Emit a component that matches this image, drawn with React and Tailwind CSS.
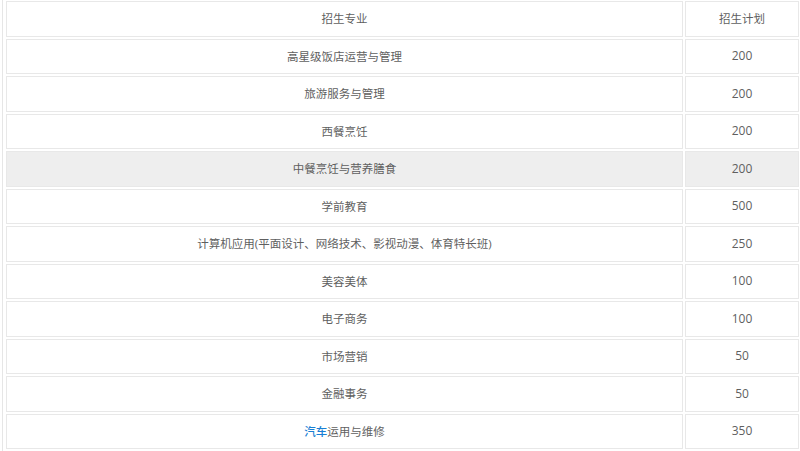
import React from "react";

const rows = [
  ["高星级饭店运营与管理", "200"],
  ["旅游服务与管理", "200"],
  ["西餐烹饪", "200"],
  ["中餐烹饪与营养膳食", "200", true],
  ["学前教育", "500"],
  ["计算机应用(平面设计、网络技术、影视动漫、体育特长班)", "250"],
  ["美容美体", "100"],
  ["电子商务", "100"],
  ["市场营销", "50"],
  ["金融事务", "50"],
  [null, "350"],
];

export default function App() {
  return (
    <div
      className="w-[800px] h-[451px] overflow-hidden bg-white"
      style={{ fontFamily: '"Open Sans", "Noto Sans CJK SC", sans-serif' }}
    >
      <div className="ml-[2px] mt-[-1px] border-l border-[#e6e6e6] pl-[1px]">
        <table className="w-[797px] border-separate border-spacing-x-[2px] border-spacing-y-[2px] text-[12px] text-[#5f5f5f]">
          <tbody>
            <tr>
              <td className="h-[35.5px] border border-[#e8e8e8] text-center align-middle text-[11.5px]">招生专业</td>
              <td className="w-[114px] h-[35.5px] border border-[#e8e8e8] text-center align-middle text-[11.5px]">招生计划</td>
            </tr>
            {rows.map((r, i) => (
              <tr key={i} className={r[2] ? "bg-[#eeeeee]" : ""}>
                <td className="h-[35.5px] border border-[#e8e8e8] text-center align-middle text-[11.5px]">
                  {r[0] === null ? (
                    <>
                      <span className="text-[#1a7fd4] font-medium">汽车</span>运用与维修
                    </>
                  ) : (
                    r[0]
                  )}
                </td>
                <td className="h-[35.5px] border border-[#e8e8e8] text-center align-middle">{r[1]}</td>
              </tr>
            ))}
          </tbody>
        </table>
      </div>
    </div>
  );
}
